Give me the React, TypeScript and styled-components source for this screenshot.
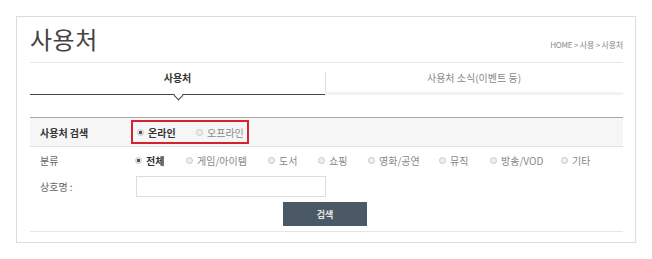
import React from "react";
import styled, { createGlobalStyle } from "styled-components";

const Global = createGlobalStyle`
  html, body { margin: 0; padding: 0; background: #fff; }
  body { font-family: "Noto Sans CJK KR", "Noto Sans", sans-serif; color: #333; }
  * { box-sizing: border-box; }
`;

const Page = styled.div`
  padding: 16px 16px 0 16px;
`;

const Card = styled.div`
  width: 620px;
  height: 227px;
  border: 1px solid #dcdcdc;
  padding: 0 12px 0 13px;
`;

const Header = styled.div`
  height: 45px;
  display: flex;
  justify-content: space-between;
  align-items: flex-end;
`;

const Title = styled.h1`
  margin: 0 0 11px 0;
  font-size: 24px;
  line-height: 24px;
  font-weight: 400;
  color: #444;
  letter-spacing: 0.5px;
`;

const Crumb = styled.div`
  font-size: 8px;
  color: #888;
  margin-bottom: 12px;
  letter-spacing: -0.2px;
`;

const Tabs = styled.div`
  display: grid;
  grid-template-columns: 295px 1fr;
  border-top: 1px solid #e6e6e6;
  height: 33px;
`;

const Tab = styled.div<{ $active?: boolean }>`
  position: relative;
  display: flex;
  align-items: center;
  justify-content: center;
  font-size: 10px;
  color: ${(p) => (p.$active ? "#333" : "#888")};
  font-weight: ${(p) => (p.$active ? 600 : 400)};
  border-bottom: ${(p) => (p.$active ? "1.5px solid #444" : "3px solid #f2f2f2")};
  padding-bottom: ${(p) => (p.$active ? "2px" : "0")};
  &::before {
    content: "";
    display: ${(p) => (p.$active ? "none" : "block")};
    position: absolute;
    left: 0;
    top: 9px;
    bottom: 0;
    border-left: 1px solid #ddd;
  }
`;

const Notch = styled.span`
  position: absolute;
  left: 50%;
  bottom: -5px;
  width: 7px;
  height: 7px;
  margin-left: -3px;
  background: #fff;
  border-right: 1px solid #444;
  border-bottom: 1px solid #444;
  transform: rotate(45deg);
`;

const Form = styled.div`
  margin-top: 22px;
  border-top: 1px solid #aaa;
  border-bottom: 1px solid #e6e6e6;
`;

const Row = styled.div<{ $shaded?: boolean; $h: number }>`
  display: flex;
  align-items: center;
  height: ${(p) => p.$h}px;
  background: ${(p) => (p.$shaded ? "#f6f6f6" : "transparent")};
  border-bottom: ${(p) => (p.$shaded ? "1px solid #e2e2e2" : "none")};
`;

const Label = styled.div<{ $bold?: boolean }>`
  width: 92px;
  padding-left: 10px;
  font-size: 10px;
  color: ${(p) => (p.$bold ? "#333" : "#666")};
  font-weight: ${(p) => (p.$bold ? 600 : 400)};
`;

const Highlight = styled.div`
  display: flex;
  align-items: center;
  gap: 0;
  border: 2px solid #d42330;
  height: 24px;
  padding: 0 0 0 4px;
  width: 118px;
  margin-left: 9px;
`;

const Options = styled.div`
  display: flex;
  align-items: center;
  margin-left: 13px;
`;

const Option = styled.label<{ $w: number }>`
  display: flex;
  align-items: center;
  width: ${(p) => p.$w}px;
  font-size: 10px;
  color: #777;
`;

const Dot = styled.span<{ $on?: boolean }>`
  width: 7px;
  height: 7px;
  border-radius: 50%;
  border: 1px solid #c8c8c8;
  background: ${(p) => (p.$on ? "radial-gradient(circle, #555 0 1.6px, #e6e6e6 2px)" : "#eee")};
  margin-right: 4px;
  flex: none;
`;

const Text = styled.span<{ $on?: boolean }>`
  color: ${(p) => (p.$on ? "#333" : "#888")};
  font-weight: ${(p) => (p.$on ? 600 : 400)};
`;

const Input = styled.input`
  margin-left: 14px;
  width: 190px;
  height: 21px;
  border: 1px solid #ddd;
  background: #fff;
  outline: none;
`;

const ButtonRow = styled.div`
  display: flex;
  justify-content: center;
  padding: 3px 3px 5px 0;
`;

const Button = styled.button`
  width: 84px;
  height: 24px;
  border: none;
  background: #4b5865;
  color: #e8e8e8;
  font-family: inherit;
  font-size: 9px;
  font-weight: 600;
`;

const cats: [string, number][] = [
  ["전체", 51],
  ["게임/아이템", 82],
  ["도서", 50],
  ["쇼핑", 50],
  ["영화/공연", 71],
  ["뮤직", 51],
  ["방송/VOD", 71],
  ["기타", 40],
];

export default function App() {
  return (
    <Page>
      <Global />
      <Card>
        <Header>
          <Title>사용처</Title>
          <Crumb>HOME &gt; 사용 &gt; 사용처</Crumb>
        </Header>
        <Tabs>
          <Tab $active>
            사용처
            <Notch />
          </Tab>
          <Tab>사용처 소식(이벤트 등)</Tab>
        </Tabs>
        <Form>
          <Row $shaded $h={29}>
            <Label $bold>사용처 검색</Label>
            <Highlight>
              <Option $w={59}>
                <Dot $on />
                <Text $on>온라인</Text>
              </Option>
              <Option $w={50}>
                <Dot />
                <Text>오프라인</Text>
              </Option>
            </Highlight>
          </Row>
          <Row $h={26}>
            <Label>분류</Label>
            <Options>
              {cats.map(([c, w], i) => (
                <Option key={c} $w={w}>
                  <Dot $on={i === 0} />
                  <Text $on={i === 0}>{c}</Text>
                </Option>
              ))}
            </Options>
          </Row>
          <Row $h={26}>
            <Label>상호명 :</Label>
            <Input />
          </Row>
          <ButtonRow>
            <Button>검색</Button>
          </ButtonRow>
        </Form>
      </Card>
    </Page>
  );
}
